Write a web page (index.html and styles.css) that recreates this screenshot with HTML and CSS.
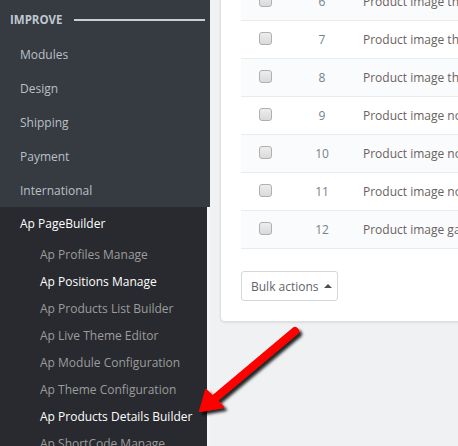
FILE: index.html
```html
<!DOCTYPE html>
<html lang="en">
<head>
<meta charset="utf-8">
<title>Ap PageBuilder</title>
<link rel="stylesheet" href="styles.css">
</head>
<body>
<div class="layout">
  <aside class="sidebar">
    <nav class="nav-main">
      <div class="nav-head"><span class="nav-head-label">IMPROVE</span><i class="nav-rule"></i></div>
      <a class="nav-item">Modules</a>
      <a class="nav-item">Design</a>
      <a class="nav-item">Shipping</a>
      <a class="nav-item">Payment</a>
      <a class="nav-item">International</a>
    </nav>
    <div class="sub-wrap">
      <nav class="nav-sub">
        <div class="sub-title">Ap PageBuilder</div>
        <a class="sub-item">Ap Profiles Manage</a>
        <a class="sub-item active">Ap Positions Manage</a>
        <a class="sub-item">Ap Products List Builder</a>
        <a class="sub-item">Ap Live Theme Editor</a>
        <a class="sub-item">Ap Module Configuration</a>
        <a class="sub-item">Ap Theme Configuration</a>
        <a class="sub-item active">Ap Products Details Builder</a>
        <a class="sub-item">Ap ShortCode Manage</a>
      </nav>
    </div>
  </aside>
  <main class="content">
    <section class="card">
      <div class="rows">
        <div class="row alt"><span class="cell-check"><span class="checkbox"></span></span><span class="cell-id">6</span><span class="cell-name">Product image thumbnail</span></div>
        <div class="row"><span class="cell-check"><span class="checkbox"></span></span><span class="cell-id">7</span><span class="cell-name">Product image thumbnail</span></div>
        <div class="row alt"><span class="cell-check"><span class="checkbox"></span></span><span class="cell-id">8</span><span class="cell-name">Product image thumbnail</span></div>
        <div class="row"><span class="cell-check"><span class="checkbox"></span></span><span class="cell-id">9</span><span class="cell-name">Product image no thumbnail</span></div>
        <div class="row alt"><span class="cell-check"><span class="checkbox"></span></span><span class="cell-id">10</span><span class="cell-name">Product image no thumbnail</span></div>
        <div class="row"><span class="cell-check"><span class="checkbox"></span></span><span class="cell-id">11</span><span class="cell-name">Product image no thumbnail</span></div>
        <div class="row alt"><span class="cell-check"><span class="checkbox"></span></span><span class="cell-id">12</span><span class="cell-name">Product image gallery</span></div>
      </div>
      <div class="actions">
        <button class="bulk" type="button">Bulk actions <span class="caret"></span></button>
      </div>
    </section>
  </main>
</div>
<svg class="arrow" width="458" height="446" viewBox="0 0 458 446" aria-hidden="true">
  <defs>
    <filter id="shadow" x="-20%" y="-20%" width="140%" height="140%">
      <feDropShadow dx="3" dy="3" stdDeviation="1.6" flood-color="#000" flood-opacity="0.85"/>
    </filter>
  </defs>
  <g filter="url(#shadow)" fill="#ff0000" stroke="#ff0000">
    <line x1="295" y1="331" x2="214" y2="399" stroke-width="8" stroke-linecap="round"/>
    <polygon points="200,411 206,390 223,407" stroke-width="2" stroke-linejoin="round"/>
  </g>
</svg>
</body>
</html>
```
FILE: styles.css
```css
* { box-sizing: border-box; }
html, body {
  margin: 0;
  padding: 0;
  height: 100%;
  overflow: hidden;
}
body {
  background: #eff1f2;
  font-family: "Open Sans", "DejaVu Sans", sans-serif;
  font-size: 12px;
  position: relative;
}
.layout {
  display: flex;
  height: 446px;
}
.sidebar {
  width: 210px;
  flex: 0 0 210px;
  display: flex;
  flex-direction: column;
}
.nav-main {
  background: #363a41;
  display: flex;
  flex-direction: column;
  height: 207px;
}
.nav-head {
  height: 37px;
  padding-top: 2px;
  display: flex;
  align-items: center;
  padding-left: 10px;
  padding-right: 5px;
}
.nav-head-label {
  color: #bfc8d1;
  font-weight: 700;
  font-size: 11.5px;
}
.nav-rule {
  flex: 1;
  margin-left: 11px;
  height: 2px;
  background: #c9ced3;
}
.nav-item {
  height: 34px;
  padding-top: 2px;
  line-height: 32px;
  padding-left: 20px;
  color: #b9c0c7;
}
.sub-wrap {
  flex: 1;
  background: #f5f6f7;
  display: flex;
}
.nav-sub {
  width: 207px;
  background: #282a2f;
  display: flex;
  flex-direction: column;
}
.sub-title {
  height: 33px;
  padding-top: 1px;
  line-height: 32px;
  padding-left: 20px;
  color: #ffffff;
}
.sub-item {
  height: 27px;
  padding-top: 2px;
  line-height: 25px;
  padding-left: 40px;
  color: #9c9c9c;
}
.sub-item.active {
  color: #ffffff;
}
.content {
  flex: 1;
  padding-left: 10px;
  min-width: 0;
}
.card {
  margin-top: -17px;
  width: 260px;
  background: #ffffff;
  border: 1px solid #dde1e4;
  border-top: none;
  border-right: none;
  border-radius: 0 0 0 5px;
  box-shadow: 0 1px 2px rgba(0, 0, 0, 0.08);
  padding: 0 0 20px 20px;
}
.rows {
  display: flex;
  flex-direction: column;
}
.row {
  display: grid;
  grid-template-columns: 56px 50px 1fr;
  height: 38px;
  border-bottom: 1px solid #e9ecee;
  color: #666b70;
  white-space: nowrap;
  overflow: hidden;
}
.row.alt {
  background: #fafbfc;
}
.cell-check {
  padding: 11px 0 0 18px;
}
.checkbox {
  display: block;
  width: 13px;
  height: 13px;
  border: 1px solid #b0b0b0;
  border-radius: 3px;
  background: linear-gradient(#ededed, #dadada);
}
.cell-id {
  text-align: center;
  line-height: 37px;
  color: #76828a;
}
.cell-name {
  padding-left: 16px;
  line-height: 37px;
  color: #6a6260;
}
.actions {
  padding-top: 22px;
}
.bulk {
  height: 30px;
  width: 97px;
  padding: 0 0 0 9px;
  text-align: left;
  font-family: inherit;
  font-size: 12px;
  color: #5f6468;
  background: #ffffff;
  border: 1px solid #d3d8db;
  border-radius: 3px;
  display: flex;
  align-items: center;
}
.caret {
  display: inline-block;
  margin-left: 5px;
  width: 0;
  height: 0;
  border-left: 4px solid transparent;
  border-right: 4px solid transparent;
  border-bottom: 4px solid #4b4f53;
}
.arrow {
  position: absolute;
  left: 0;
  top: 0;
  pointer-events: none;
}
```
